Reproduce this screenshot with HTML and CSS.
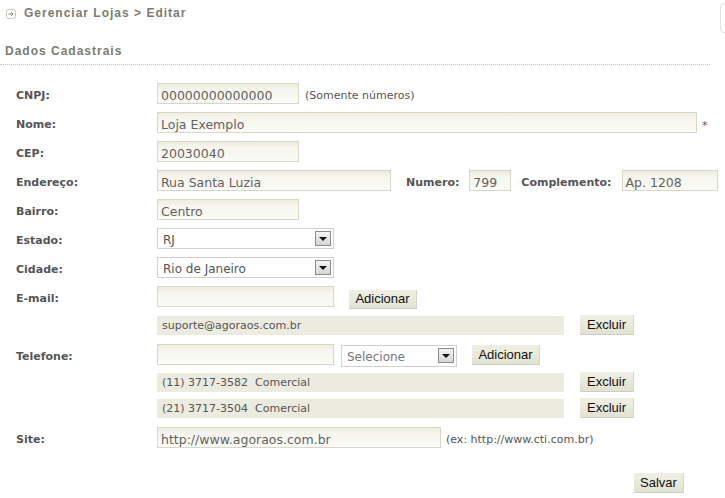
FILE: index.html
```html
<!DOCTYPE html>
<html lang="pt-BR">
<head>
<meta charset="utf-8">
<title>Gerenciar Lojas - Editar</title>
<link rel="stylesheet" href="styles.css">
</head>
<body>
<div class="page">
  <div class="side-tab"></div>
  <div class="crumb">
    <svg class="crumb-icon" width="10" height="10" viewBox="0 0 10 10"><rect x="0.5" y="0.5" width="9" height="9" rx="2" fill="#fff" stroke="#c8c8c0"/><path d="M2.5 5h4.5M5 3l2 2-2 2" fill="none" stroke="#8a8a80" stroke-width="1"/></svg>
    <span>Gerenciar Lojas &gt; Editar</span>
  </div>
  <h2 class="section">Dados Cadastrais</h2>

  <div class="form">
    <div class="row">
      <span class="lbl">CNPJ:</span>
      <span class="inp w142">00000000000000</span>
      <span class="hint">(Somente números)</span>
    </div>
    <div class="row">
      <span class="lbl">Nome:</span>
      <span class="inp w540">Loja Exemplo</span>
      <span class="req">*</span>
    </div>
    <div class="row">
      <span class="lbl">CEP:</span>
      <span class="inp w142">20030040</span>
    </div>
    <div class="row">
      <span class="lbl">Endereço:</span>
      <span class="inp w234">Rua Santa Luzia</span>
      <span class="lbl-inline num-lbl">Numero:</span>
      <span class="inp w42">799</span>
      <span class="lbl-inline comp-lbl">Complemento:</span>
      <span class="inp w96">Ap. 1208</span>
    </div>
    <div class="row">
      <span class="lbl">Bairro:</span>
      <span class="inp w142">Centro</span>
    </div>
    <div class="row">
      <span class="lbl">Estado:</span>
      <span class="sel w177"><span class="sel-text">RJ</span><span class="arrow"></span></span>
    </div>
    <div class="row">
      <span class="lbl">Cidade:</span>
      <span class="sel w177"><span class="sel-text">Rio de Janeiro</span><span class="arrow"></span></span>
    </div>
    <div class="row">
      <span class="lbl">E-mail:</span>
      <span class="inp w177"></span>
      <span class="btn btn-add low">Adicionar</span>
    </div>
    <div class="row item-row email-item">
      <span class="lbl"></span>
      <span class="item">suporte@agoraos.com.br</span>
      <span class="btn btn-del">Excluir</span>
    </div>
    <div class="row phone-row">
      <span class="lbl">Telefone:</span>
      <span class="inp w177"></span>
      <span class="sel w116 sel-phone"><span class="sel-text muted">Selecione</span><span class="arrow"></span></span>
      <span class="btn btn-add">Adicionar</span>
    </div>
    <div class="row item-row phone-item">
      <span class="lbl"></span>
      <span class="item">(11) 3717-3582&nbsp; Comercial</span>
      <span class="btn btn-del">Excluir</span>
    </div>
    <div class="row item-row phone-item last">
      <span class="lbl"></span>
      <span class="item">(21) 3717-3504&nbsp; Comercial</span>
      <span class="btn btn-del">Excluir</span>
    </div>
    <div class="row">
      <span class="lbl">Site:</span>
      <span class="inp w284">http://www.agoraos.com.br</span>
      <span class="hint site-hint">(ex: http://www.cti.com.br)</span>
    </div>
    <div class="actions">
      <span class="btn btn-save">Salvar</span>
    </div>
  </div>
</div>
</body>
</html>
```

FILE: styles.css
```css
html, body {
  margin: 0;
  padding: 0;
  background: #ffffff;
}

.page {
  position: relative;
  width: 725px;
  height: 498px;
  overflow: hidden;
  font-family: "DejaVu Sans", Verdana, sans-serif;
  color: #555555;
}

.side-tab {
  position: absolute;
  left: 720px;
  top: 3px;
  width: 20px;
  height: 28px;
  border: 1px solid #e2e2da;
  border-radius: 4px;
}

.crumb {
  display: flex;
  align-items: center;
  height: 14px;
  margin-top: 6px;
  padding-left: 6px;
  font-family: "Liberation Sans", Arial, sans-serif;
  font-size: 12px;
  font-weight: bold;
  letter-spacing: 1px;
  color: #7c7c6e;
}

.crumb-icon {
  margin-right: 8px;
  margin-top: 2px;
}

.section {
  margin: 24px 0 0 0;
  width: 705px;
  padding: 0 0 6px 5px;
  height: 14px;
  line-height: 14px;
  font-family: "Liberation Sans", Arial, sans-serif;
  font-size: 12px;
  font-weight: bold;
  letter-spacing: 1px;
  color: #7c7c6e;
  border-bottom: 1px dotted #cacac2;
}

.form {
  margin-top: 18px;
}

.row {
  display: flex;
  align-items: center;
  height: 21px;
  margin-bottom: 8px;
}

.row.email-item {
  height: 20px;
  margin-bottom: 9px;
}

.row.phone-row {
  margin-bottom: 7px;
}

.row.phone-item {
  height: 20px;
  margin-bottom: 6px;
}

.row.phone-item.last {
  margin-bottom: 9px;
}

.lbl {
  box-sizing: border-box;
  width: 157px;
  flex: none;
  padding-left: 16px;
  padding-top: 4px;
  font-size: 11px;
  font-weight: bold;
  color: #555555;
}

.lbl-inline {
  padding-top: 4px;
  font-size: 11px;
  font-weight: bold;
  color: #555555;
}

.num-lbl {
  margin-left: 15px;
  margin-right: 10px;
}

.comp-lbl {
  margin-left: 10px;
  margin-right: 10px;
}

.inp {
  box-sizing: border-box;
  flex: none;
  height: 21px;
  padding: 3px 3px 0 3px;
  border: 1px solid #d8d8c8;
  background: linear-gradient(#ecece0 0, #f6f6ee 30%, #fbfbf7 100%);
  font-size: 12.5px;
  line-height: 17px;
  color: #626262;
  white-space: nowrap;
  overflow: hidden;
}

.w42 { width: 42px; }
.w96 { width: 96px; }
.w142 { width: 142px; }
.w177 { width: 177px; }
.w234 { width: 234px; }
.w284 { width: 284px; }
.w540 { width: 540px; }
.w116 { width: 116px; }

.hint {
  margin-left: 6px;
  padding-top: 4px;
  font-size: 11px;
  color: #555555;
}

.site-hint {
  margin-left: 5px;
}

.req {
  margin-left: 5px;
  padding-top: 6px;
  font-size: 11px;
  color: #555555;
}

.sel {
  box-sizing: border-box;
  flex: none;
  display: flex;
  align-items: center;
  justify-content: space-between;
  height: 21px;
  padding: 0 2px 0 5px;
  border: 1px solid #d2d2cc;
  background: #ffffff;
  font-size: 12px;
  color: #555555;
}

.sel-phone {
  margin-left: 7px;
  height: 22px;
  margin-top: 2px;
}

.sel-text {
  padding-top: 2px;
}

.sel-text.muted {
  color: #777777;
}

.arrow {
  box-sizing: border-box;
  position: relative;
  width: 16px;
  height: 15px;
  border: 1px solid #8c8c8c;
  background: linear-gradient(#f4f4f4, #d6d6d6);
}

.arrow::after {
  content: "";
  position: absolute;
  left: 3px;
  top: 5px;
  border-left: 4px solid transparent;
  border-right: 4px solid transparent;
  border-top: 4px solid #111111;
}

.btn {
  box-sizing: border-box;
  flex: none;
  display: flex;
  align-items: center;
  justify-content: center;
  height: 20px;
  padding: 0 7px;
  font-family: "Liberation Sans", Arial, sans-serif;
  font-size: 13px;
  color: #111111;
  background: linear-gradient(#efefe4, #e2e2d3);
  border-right: 1px solid #d6d6c8;
  border-bottom: 1px solid #cfcfc0;
}

.btn-add {
  width: 68px;
  margin-left: 15px;
}

.btn-add.low {
  margin-top: 5px;
  height: 19px;
}

.btn-del {
  width: 54px;
  margin-left: 16px;
}

.btn-save {
  width: 50px;
}

.item {
  box-sizing: border-box;
  flex: none;
  width: 407px;
  height: 19px;
  padding-left: 5px;
  line-height: 19px;
  background: #ebebdf;
  font-size: 11px;
  color: #555555;
  white-space: nowrap;
}

.actions {
  display: flex;
  justify-content: flex-end;
  width: 684px;
  margin-top: 25px;
}
```
